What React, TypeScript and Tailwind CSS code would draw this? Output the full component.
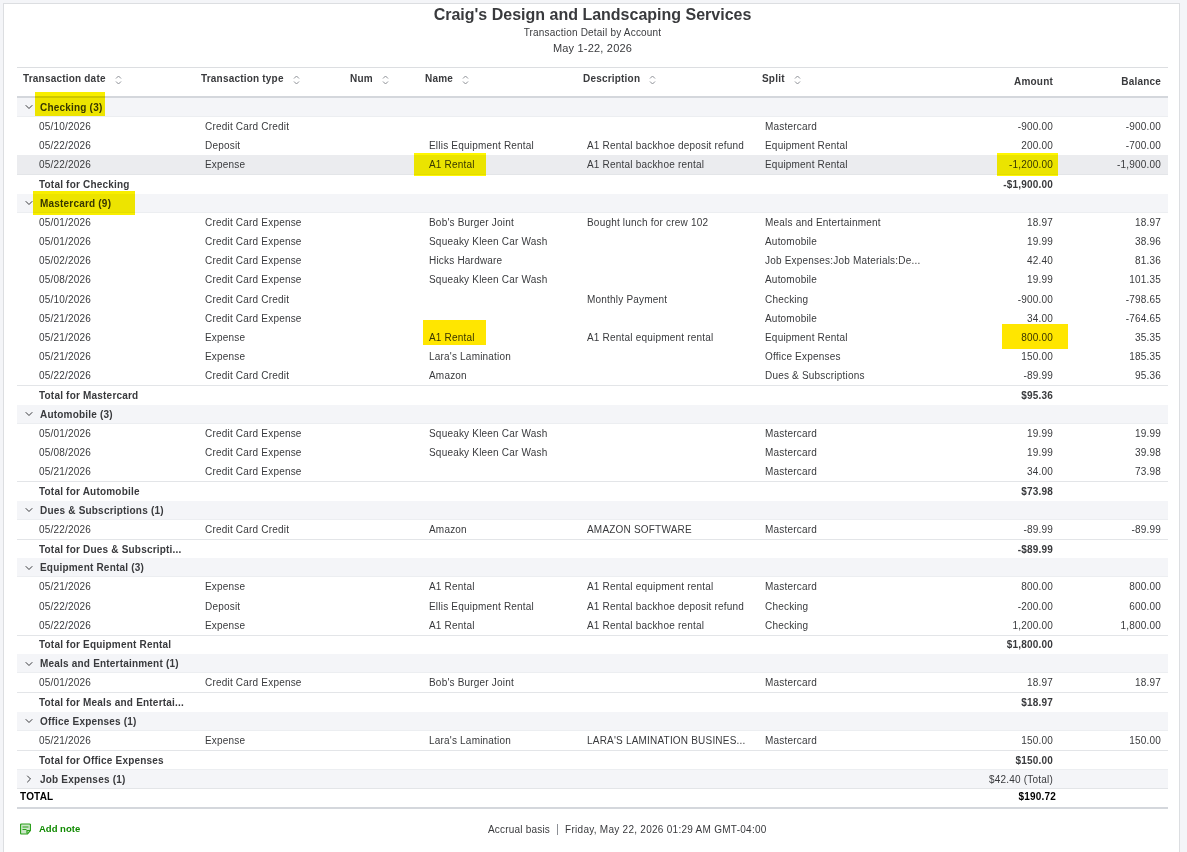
import { ChevronDown, ChevronRight } from "lucide-react";

type Row = {
  kind: "group" | "row" | "total";
  date?: string;
  type?: string;
  name?: string;
  desc?: string;
  split?: string;
  amount?: string;
  balance?: string;
  label?: string;
  shaded?: boolean;
};

const r = (
  date: string,
  type: string,
  name: string,
  desc: string,
  split: string,
  amount: string,
  balance: string,
  shaded = false
): Row => ({ kind: "row", date, type, name, desc, split, amount, balance, shaded });

const g = (label: string, count: number): Row => ({ kind: "group", label: `${label}|(${count})` });
const t = (label: string, amount: string): Row => ({ kind: "total", label, amount });

const rows: Row[] = [
  g("Checking", 3),
  r("05/10/2026", "Credit Card Credit", "", "", "Mastercard", "-900.00", "-900.00"),
  r("05/22/2026", "Deposit", "Ellis Equipment Rental", "A1 Rental backhoe deposit refund", "Equipment Rental", "200.00", "-700.00"),
  r("05/22/2026", "Expense", "A1 Rental", "A1 Rental backhoe rental", "Equipment Rental", "-1,200.00", "-1,900.00", true),
  t("Total for Checking", "-$1,900.00"),
  g("Mastercard", 9),
  r("05/01/2026", "Credit Card Expense", "Bob's Burger Joint", "Bought lunch for crew 102", "Meals and Entertainment", "18.97", "18.97"),
  r("05/01/2026", "Credit Card Expense", "Squeaky Kleen Car Wash", "", "Automobile", "19.99", "38.96"),
  r("05/02/2026", "Credit Card Expense", "Hicks Hardware", "", "Job Expenses:Job Materials:De...", "42.40", "81.36"),
  r("05/08/2026", "Credit Card Expense", "Squeaky Kleen Car Wash", "", "Automobile", "19.99", "101.35"),
  r("05/10/2026", "Credit Card Credit", "", "Monthly Payment", "Checking", "-900.00", "-798.65"),
  r("05/21/2026", "Credit Card Expense", "", "", "Automobile", "34.00", "-764.65"),
  r("05/21/2026", "Expense", "A1 Rental", "A1 Rental equipment rental", "Equipment Rental", "800.00", "35.35"),
  r("05/21/2026", "Expense", "Lara's Lamination", "", "Office Expenses", "150.00", "185.35"),
  r("05/22/2026", "Credit Card Credit", "Amazon", "", "Dues & Subscriptions", "-89.99", "95.36"),
  t("Total for Mastercard", "$95.36"),
  g("Automobile", 3),
  r("05/01/2026", "Credit Card Expense", "Squeaky Kleen Car Wash", "", "Mastercard", "19.99", "19.99"),
  r("05/08/2026", "Credit Card Expense", "Squeaky Kleen Car Wash", "", "Mastercard", "19.99", "39.98"),
  r("05/21/2026", "Credit Card Expense", "", "", "Mastercard", "34.00", "73.98"),
  t("Total for Automobile", "$73.98"),
  g("Dues & Subscriptions", 1),
  r("05/22/2026", "Credit Card Credit", "Amazon", "AMAZON SOFTWARE", "Mastercard", "-89.99", "-89.99"),
  t("Total for Dues & Subscripti...", "-$89.99"),
  g("Equipment Rental", 3),
  r("05/21/2026", "Expense", "A1 Rental", "A1 Rental equipment rental", "Mastercard", "800.00", "800.00"),
  r("05/22/2026", "Deposit", "Ellis Equipment Rental", "A1 Rental backhoe deposit refund", "Checking", "-200.00", "600.00"),
  r("05/22/2026", "Expense", "A1 Rental", "A1 Rental backhoe rental", "Checking", "1,200.00", "1,800.00"),
  t("Total for Equipment Rental", "$1,800.00"),
  g("Meals and Entertainment", 1),
  r("05/01/2026", "Credit Card Expense", "Bob's Burger Joint", "", "Mastercard", "18.97", "18.97"),
  t("Total for Meals and Entertai...", "$18.97"),
  g("Office Expenses", 1),
  r("05/21/2026", "Expense", "Lara's Lamination", "LARA'S LAMINATION BUSINES...", "Mastercard", "150.00", "150.00"),
  t("Total for Office Expenses", "$150.00"),
];

const cols = "grid grid-cols-[178px_149px_75px_158px_178px_175px_128px_110px]";

function SortIcon() {
  return (
    <svg width="7" height="10" viewBox="0 0 7 10" className="ml-[9px] mt-[4px] shrink-0" fill="none" stroke="#8d9096" strokeWidth="1">
      <path d="M1 3.5 3.5 1 6 3.5" />
      <path d="M1 6.5 3.5 9 6 6.5" />
    </svg>
  );
}

function Head({ children, split }: { children: string; split?: boolean }) {
  return (
    <div className={`flex items-start pt-[3px] font-bold text-[#393a3d] ${split ? "pl-[7px]" : "pl-[6px]"}`}>
      <span>{children}</span>
      <SortIcon />
    </div>
  );
}

function TableRow({ row }: { row: Row }) {
  if (row.kind === "group") {
    const [label, count] = row.label!.split("|");
    return (
      <div className="flex h-[19.2px] items-center border-b border-[#eceef1] bg-[#f4f5f8] pt-px">
        <ChevronDown size={12} strokeWidth={2} className="ml-[6px] mr-[5px] text-[#393a3d]" />
        <span className="font-bold text-[#393a3d]">
          {label} {count}
        </span>
      </div>
    );
  }
  if (row.kind === "total") {
    return (
      <div className={`${cols} h-[19.2px] items-center border-t border-[#e3e5e8] font-bold text-[#393a3d]`}>
        <div className="col-span-2 pl-[22px]">{row.label}</div>
        <div className="col-start-7 pr-[5px] text-right">{row.amount}</div>
      </div>
    );
  }
  return (
    <div className={`${cols} h-[19.2px] items-center text-[#393a3d] ${row.shaded ? "bg-[#ebecef]" : ""}`}>
      <div className="pl-[22px]">{row.date}</div>
      <div className="pl-[10px]">{row.type}</div>
      <div />
      <div className="pl-[10px]">{row.name}</div>
      <div className="pl-[10px] whitespace-nowrap">{row.desc}</div>
      <div className="pl-[10px] whitespace-nowrap">{row.split}</div>
      <div className="pr-[5px] text-right">{row.amount}</div>
      <div className="pr-[7px] text-right">{row.balance}</div>
    </div>
  );
}

export default function App() {
  return (
    <div className="h-[852px] w-[1187px] overflow-hidden bg-[#f4f5f8] pl-[3px] pr-[7px] pt-[3px] font-['Liberation_Sans',Arial,sans-serif] text-[10px] tracking-[0.2px]">
      <div className="relative h-full border-l border-r border-t border-[#dcdee1] bg-white pl-[13px] pr-[11px]">
        <div className="flex h-[63px] flex-col items-center text-[#393a3d]">
          <div className="mt-[1px] text-[16px] font-bold leading-[20px] tracking-normal">Craig's Design and Landscaping Services</div>
          <div className="mt-[2px] text-[10px] leading-[12px]">Transaction Detail by Account</div>
          <div className="mt-[2px] text-[11px] leading-[14px]">May 1-22, 2026</div>
        </div>
        <div className={`${cols} h-[30.6px] border-b-[2px] border-t border-b-[#d4d7dc] border-t-[#dcdee1]`}>
          <Head>Transaction date</Head>
          <Head>Transaction type</Head>
          <Head>Num</Head>
          <Head>Name</Head>
          <Head>Description</Head>
          <Head split>Split</Head>
          <div className="pr-[5px] pt-[6px] text-right font-bold text-[#393a3d]">Amount</div>
          <div className="pr-[7px] pt-[6px] text-right font-bold text-[#393a3d]">Balance</div>
        </div>
        {rows.map((row, i) => (
          <TableRow key={i} row={row} />
        ))}
        <div className={`${cols} h-[20px] items-center border-b border-t border-b-[#e3e5e8] border-t-[#eceef1] bg-[#f4f5f8] font-bold text-[#393a3d]`}>
          <div className="col-span-2 flex items-center">
            <ChevronRight size={12} strokeWidth={2} className="ml-[6px] mr-[5px]" />
            Job Expenses (1)
          </div>
          <div className="col-start-7 whitespace-nowrap pr-[5px] text-right font-normal">$42.40 (Total)</div>
        </div>
        <div className={`${cols} h-[20px] border-b-[2px] border-b-[#d4d7dc] font-bold text-black`}>
          <div className="col-span-2 pl-[3px]">TOTAL</div>
          <div className="col-start-7 pr-[2px] text-right">$190.72</div>
        </div>
        <div className="relative mt-[10px] flex h-[20px] items-center text-[#393a3d]">
          <div className="flex items-center gap-[8px] pl-[3px] text-[9.5px] font-bold tracking-normal text-[#108a00]">
            <svg width="11" height="12" viewBox="0 0 11 12" fill="none">
              <path d="M1.5 1h8a1 1 0 0 1 1 1v5.5L7.5 11h-6a1 1 0 0 1-1-1V2a1 1 0 0 1 1-1z" fill="#2ca01c" fillOpacity="0.25" stroke="#2ca01c" strokeWidth="1.2" />
              <path d="M2.5 4h6M2.5 6.5h4" stroke="#2ca01c" strokeWidth="1.2" />
              <path d="M7 10.5V7.5h3" stroke="#2ca01c" strokeWidth="1.2" />
            </svg>
            <span>Add note</span>
          </div>
          <div className="absolute left-[471px] flex items-center whitespace-nowrap">
            <span>Accrual basis</span>
            <span className="mx-[7px] h-[11px] w-px bg-[#8d9096]" />
            <span className="tracking-[0.27px]">Friday, May 22, 2026 01:29 AM GMT-04:00</span>
          </div>
        </div>
        <div className="pointer-events-none absolute left-[31px] top-[88px] h-[24px] w-[70px] bg-[#f8ee00] mix-blend-multiply" />
        <div className="pointer-events-none absolute left-[29px] top-[187px] h-[24px] w-[102px] bg-[#f8ee00] mix-blend-multiply" />
        <div className="pointer-events-none absolute left-[410px] top-[149px] h-[23px] w-[72px] bg-[#fff700] mix-blend-multiply" />
        <div className="pointer-events-none absolute left-[993px] top-[149px] h-[23px] w-[61px] bg-[#fff700] mix-blend-multiply" />
        <div className="pointer-events-none absolute left-[419px] top-[316px] h-[25px] w-[63px] bg-[#ffe600] mix-blend-multiply" />
        <div className="pointer-events-none absolute left-[998px] top-[320px] h-[25px] w-[66px] bg-[#ffe600] mix-blend-multiply" />
      </div>
    </div>
  );
}
